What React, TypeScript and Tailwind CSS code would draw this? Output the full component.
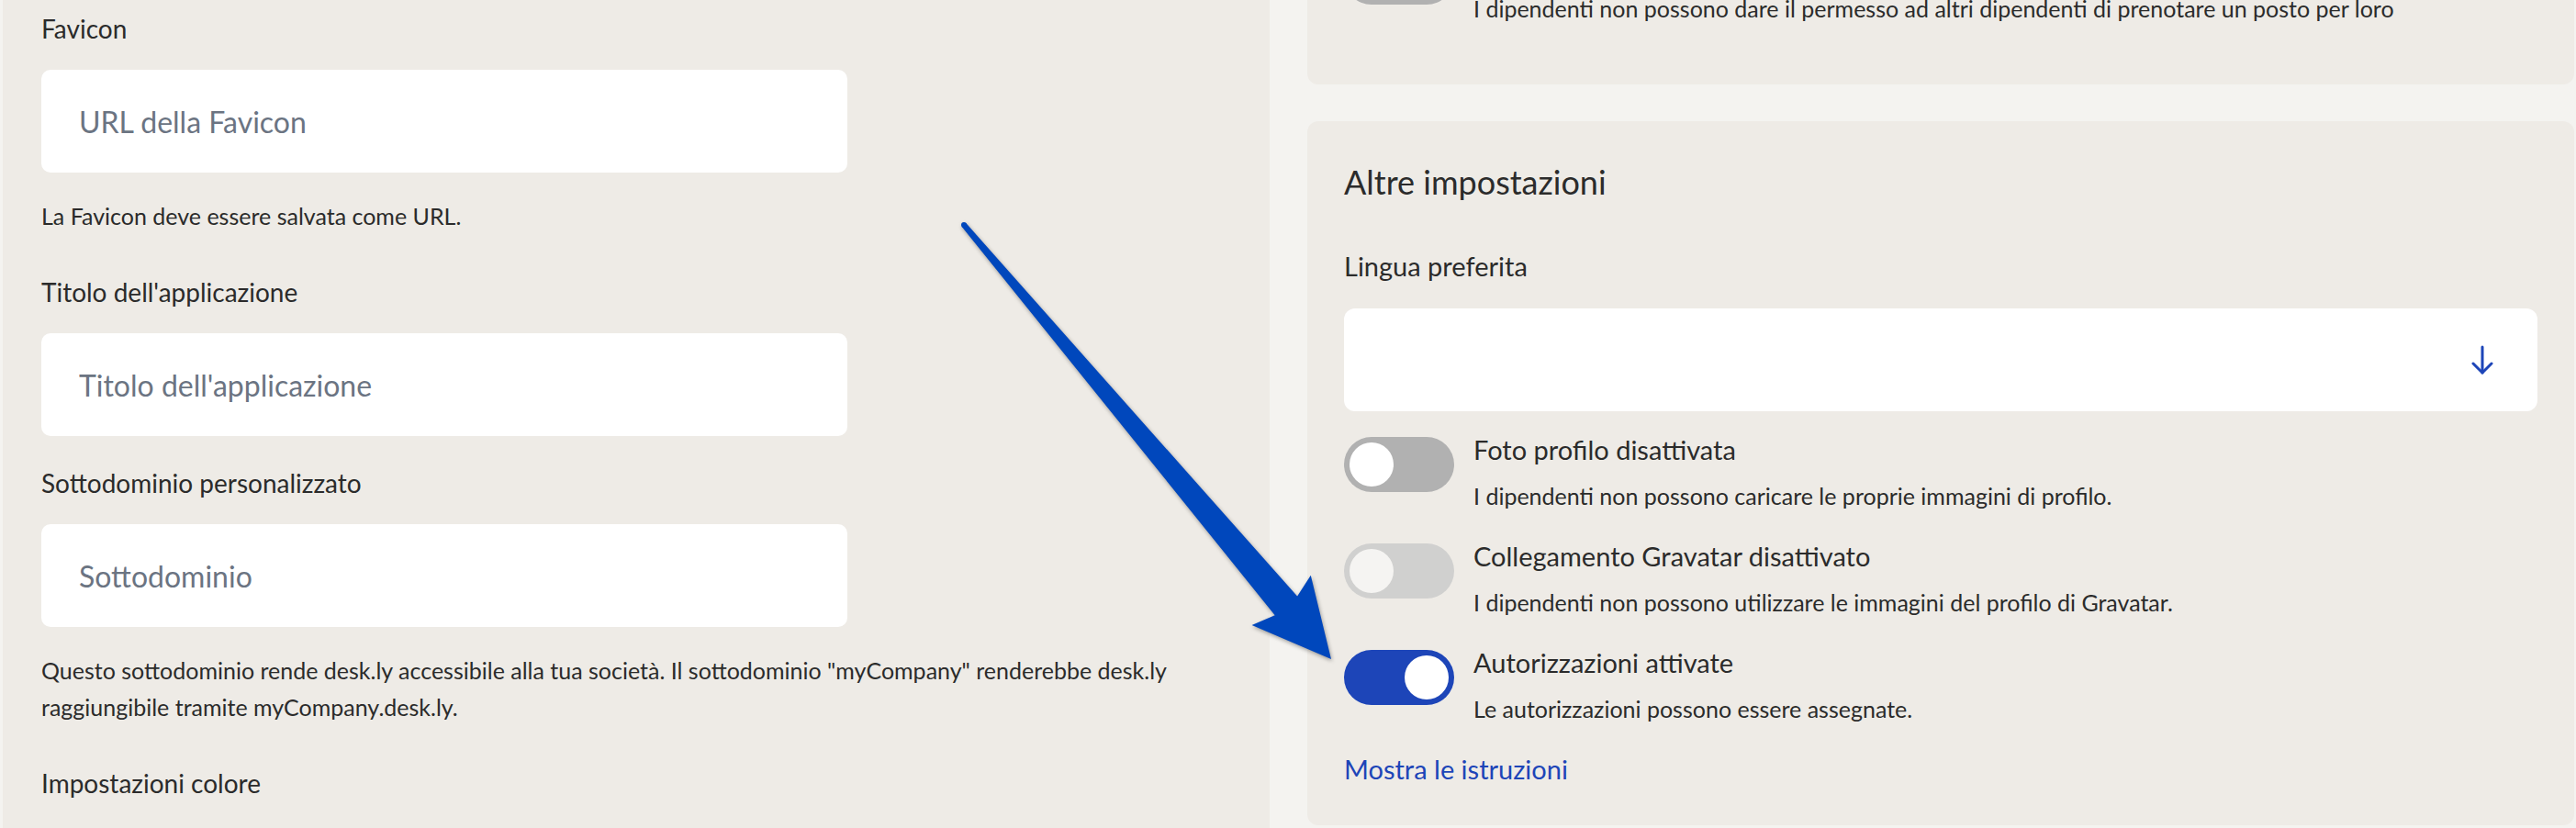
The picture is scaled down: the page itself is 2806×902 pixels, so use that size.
import React from "react";

const Field = ({
  label,
  placeholder,
  help,
  className = "",
}: {
  label: string;
  placeholder: string;
  help?: React.ReactNode;
  className?: string;
}) => (
  <div className={`flex flex-col ${className}`}>
    <label className="text-[28px] leading-[40px] text-[#2b2b2b]">{label}</label>
    <input
      readOnly
      placeholder={placeholder}
      className="mt-[25px] h-[112px] w-[878px] rounded-[10px] bg-white pl-[41px] text-[32px] text-[#2b2b2b] outline-none placeholder:text-[#6b7482]"
    />
    {help && <p className="mt-[27px] text-[25px] leading-[40px] text-[#2b2b2b]">{help}</p>}
  </div>
);

const Toggle = ({ state }: { state: "off" | "disabled" | "on" }) => {
  const track =
    state === "on" ? "bg-[#1d45b8] justify-end" : state === "off" ? "bg-[#b1b1b1]" : "bg-[#d0d0cf]";
  const knob = state === "disabled" ? "bg-[#f5f4f2]" : "bg-white";
  return (
    <div className={`flex h-[60px] w-[120px] shrink-0 items-center rounded-full p-[6px] ${track}`}>
      <div className={`h-[48px] w-[48px] rounded-full ${knob}`} />
    </div>
  );
};

const ToggleRow = ({
  state,
  title,
  desc,
  className = "",
}: {
  state: "off" | "disabled" | "on";
  title?: string;
  desc: string;
  className?: string;
}) => (
  <div className={`flex items-start gap-[21px] ${className}`}>
    <Toggle state={state} />
    <div className="flex flex-col">
      {title ? (
        <span className="text-[29px] leading-[28px] text-[#2b2b2b]">{title}</span>
      ) : (
        <span className="h-[28px]" />
      )}
      <span className="mt-[21px] text-[25px] leading-[30px] text-[#2b2b2b]">{desc}</span>
    </div>
  </div>
);

const Arrow = () => (
  <svg
    className="pointer-events-none absolute inset-0 drop-shadow-[1px_2px_2px_rgba(0,0,0,0.35)]"
    width="2806"
    height="902"
    viewBox="0 0 2806 902"
  >
    <polygon
      fill="#0047bc"
      points="1052.3,243.1 1413.1,649.6 1427.8,626.7 1450,718 1363.6,680.9 1388.7,670.2 1047.7,246.9"
    />
    <circle cx="1050" cy="245" r="3" fill="#0047bc" />
  </svg>
);

export default function App() {
  return (
    <div className="relative flex h-[902px] w-[2806px] overflow-hidden bg-[#f4f3f0] font-['Lato',sans-serif]">
      {/* left settings panel */}
      <div className="ml-[3px] flex h-full w-[1380px] shrink-0 flex-col bg-[#eeebe6] pl-[42px] pr-[45px] pt-[11px]">
        <Field label="Favicon" placeholder="URL della Favicon" help="La Favicon deve essere salvata come URL." />
        <Field label="Titolo dell'applicazione" placeholder="Titolo dell'applicazione" className="mt-[43px]" />
        <Field
          label="Sottodominio personalizzato"
          placeholder="Sottodominio"
          className="mt-[31px]"
          help={
            <>
              Questo sottodominio rende desk.ly accessibile alla tua società. Il sottodominio "myCompany" renderebbe
              desk.ly raggiungibile tramite myCompany.desk.ly.
            </>
          }
        />
        <span className="mt-[43px] text-[28px] leading-[40px] text-[#2b2b2b]">Impostazioni colore</span>
      </div>

      {/* right column */}
      <div className="ml-[41px] flex w-[1380px] shrink-0 flex-col">
        <div className="-mt-[55px] rounded-[12px] bg-[#eeebe6] px-[40px] pb-[68px]">
          <ToggleRow
            state="off"
            desc="I dipendenti non possono dare il permesso ad altri dipendenti di prenotare un posto per loro"
          />
        </div>

        <div className="mt-[40px] flex flex-col rounded-[12px] bg-[#eeebe6] px-[40px] pb-[41px] pt-[42px]">
          <h2 className="text-[36px] leading-[48px] text-[#2b2b2b]">Altre impostazioni</h2>
          <span className="mt-[48px] text-[29px] leading-[40px] text-[#2b2b2b]">Lingua preferita</span>
          <div className="mt-[26px] flex h-[112px] items-center justify-end rounded-[12px] bg-white pr-[48px]">
            <svg width="24" height="32" viewBox="0 0 24 32" fill="none" stroke="#1d45b8" strokeWidth="3" strokeLinecap="round" strokeLinejoin="round">
              <path d="M12 2v28" />
              <path d="M2 20l10 10 10-10" />
            </svg>
          </div>

          <ToggleRow
            className="mt-[28px]"
            state="off"
            title="Foto profilo disattivata"
            desc="I dipendenti non possono caricare le proprie immagini di profilo."
          />
          <ToggleRow
            className="mt-[37px]"
            state="disabled"
            title="Collegamento Gravatar disattivato"
            desc="I dipendenti non possono utilizzare le immagini del profilo di Gravatar."
          />
          <ToggleRow
            className="mt-[37px]"
            state="on"
            title="Autorizzazioni attivate"
            desc="Le autorizzazioni possono essere assegnate."
          />
          <a className="mt-[31px] self-start text-[29px] leading-[40px] text-[#1d45b8]">Mostra le istruzioni</a>
        </div>
      </div>

      <Arrow />
    </div>
  );
}
